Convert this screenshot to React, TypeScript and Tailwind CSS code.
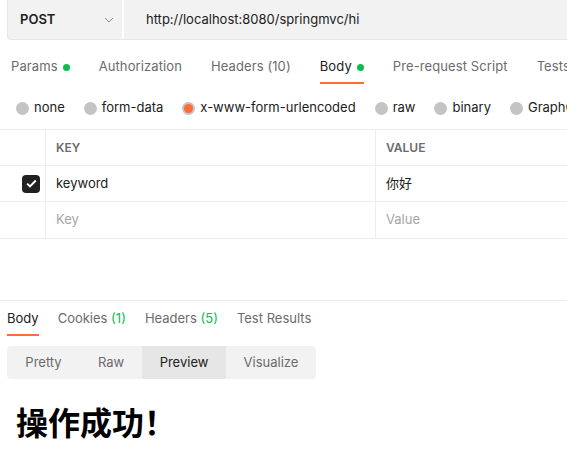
import React from "react";

const font = { fontFamily: "Inter, 'Noto Sans CJK SC', sans-serif" };

const reqTabs = [
    { label: "Params", dot: true },
    { label: "Authorization" },
    { label: "Headers", count: "(10)" },
    { label: "Body", dot: true, active: true },
    { label: "Pre-request Script" },
    { label: "Tests" },
];

const bodyTypes = ["none", "form-data", "x-www-form-urlencoded", "raw", "binary", "GraphQL"];

const Radio = ({ on }: { on?: boolean }) =>
    on ? (
        <span className="w-[13px] h-[13px] rounded-full bg-[#c4c4c4] flex items-center justify-center">
            <span className="w-[9px] h-[9px] rounded-full bg-[#ff6c37]" />
        </span>
    ) : (
        <span className="w-[13px] h-[13px] rounded-full bg-[#c4c4c4]" />
    );

export default function App() {
    return (
        <div className="w-[567px] h-[463px] overflow-hidden bg-white text-[13px] text-[#212121] whitespace-nowrap" style={font}>
            {/* url bar */}
            <div className="ml-[7px] h-[40px] flex bg-[#f2f2f2] border-l border-b border-[#e6e6e6] rounded-bl-[4px]">
                <div className="w-[116px] flex items-center justify-between pl-[12px] pr-[8px] border-r-2 border-white">
                    <span className="font-semibold text-[13px] text-[#212121]">POST</span>
                    <svg width="10" height="6" viewBox="0 0 10 6" fill="none">
                        <path d="M1 1l4 4 4-4" stroke="#8c8c8c" strokeWidth="1" />
                    </svg>
                </div>
                <div className="flex items-center pl-[22px] text-[#212121]">http://localhost:8080/springmvc/hi</div>
            </div>

            {/* request tabs */}
            <div className="flex h-[44px] pt-[10px] pl-[11px] gap-[29px]">
                {reqTabs.map((t) => (
                    <div key={t.label} className="relative flex items-center gap-[5px] tracking-[0.1px]">
                        <span className={t.active ? "text-[#212121]" : "text-[#6b6b6b]"}>
                            {t.label}
                            {t.count && <span> {t.count}</span>}
                        </span>
                        {t.dot && <span className="w-[7px] h-[7px] rounded-full bg-[#0cbb52]" />}
                        {t.active && <span className="absolute left-0 right-0 bottom-0 h-[2px] bg-[#ff6c37]" />}
                    </div>
                ))}
            </div>

            {/* body types */}
            <div className="flex items-center h-[45px] pt-[3px] pl-[16px] gap-[19px]">
                {bodyTypes.map((b) => (
                    <div key={b} className="flex items-center gap-[5px]">
                        <Radio on={b === "x-www-form-urlencoded"} />
                        <span className="text-[#212121]">{b}</span>
                    </div>
                ))}
            </div>

            {/* table */}
            <div className="border-t border-[#ededed]">
                <div className="flex h-[36px] border-b border-[#ededed] text-[12px] font-semibold text-[#6b6b6b]">
                    <div className="w-[46px] border-r border-[#ededed]" />
                    <div className="w-[330px] border-r border-[#ededed] flex items-center pl-[10px]">KEY</div>
                    <div className="flex items-center pl-[10px]">VALUE</div>
                </div>
                <div className="flex h-[36px] border-b border-[#ededed]">
                    <div className="w-[46px] border-r border-[#ededed] flex items-center justify-end pr-[5px]">
                        <span className="w-[18px] h-[18px] rounded-[4px] bg-[#212121] flex items-center justify-center">
                            <svg width="11" height="9" viewBox="0 0 11 9" fill="none">
                                <path d="M1.2 4.6l2.8 2.8L9.8 1.5" stroke="white" strokeWidth="2" />
                            </svg>
                        </span>
                    </div>
                    <div className="w-[330px] border-r border-[#ededed] flex items-center pl-[10px]">keyword</div>
                    <div className="flex items-center pl-[10px]">你好</div>
                </div>
                <div className="flex h-[37px] border-b border-[#ededed] text-[#a6a6a6]">
                    <div className="w-[46px] border-r border-[#ededed]" />
                    <div className="w-[330px] border-r border-[#ededed] flex items-center pl-[10px]">Key</div>
                    <div className="flex items-center pl-[10px]">Value</div>
                </div>
            </div>

            {/* response */}
            <div className="mt-[61px] border-t border-[#ededed]">
                <div className="flex h-[35px] pl-[7px] gap-[19px]">
                    <div className="relative flex items-center text-[#212121]">
                        Body
                        <span className="absolute left-0 right-0 bottom-0 h-[2px] bg-[#ff6c37]" />
                    </div>
                    <div className="flex items-center text-[#6b6b6b]">
                        Cookies&nbsp;<span className="text-[#0cbb52]">(1)</span>
                    </div>
                    <div className="flex items-center text-[#6b6b6b]">
                        Headers&nbsp;<span className="text-[#0cbb52]">(5)</span>
                    </div>
                    <div className="flex items-center text-[#6b6b6b]">Test Results</div>
                </div>
                <div className="mt-[10px] ml-[7px] w-[309px] h-[33px] flex bg-[#f2f2f2] rounded-[4px] overflow-hidden text-[#6b6b6b]">
                    <div className="w-[73px] flex items-center justify-center">Pretty</div>
                    <div className="w-[62px] flex items-center justify-center">Raw</div>
                    <div className="w-[84px] flex items-center justify-center bg-[#e6e6e6] text-[#212121]">Preview</div>
                    <div className="flex-1 flex items-center justify-center">Visualize</div>
                </div>
                <div className="mt-[18px] pl-[16px] text-[32px] font-bold text-black" style={{ fontFamily: "'Noto Sans CJK SC', sans-serif" }}>
                    操作成功！
                </div>
            </div>
        </div>
    );
}
